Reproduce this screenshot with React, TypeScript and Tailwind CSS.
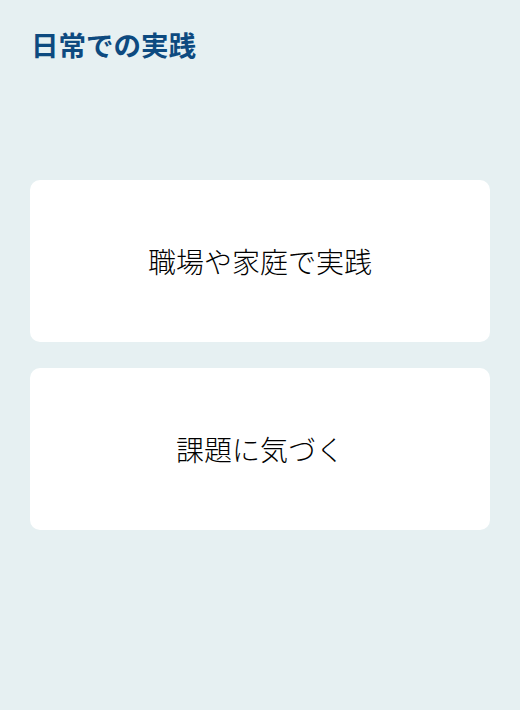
import * as React from "react";

const items = ["職場や家庭で実践", "課題に気づく"];

export default function App() {
  return (
    <div
      className="min-h-[710px] w-full bg-[#e6f0f2] px-[30px] pt-[26px]"
      style={{ fontFamily: '"Noto Sans CJK JP", "Noto Sans", sans-serif' }}
    >
      {/* Heading */}
      <h1 className="text-[27.5px] font-bold leading-[36px] text-[#0d4a80] pl-[1px]">日常での実践</h1>

      {/* Cards */}
      <div className="mt-[118px] flex flex-col gap-[26px]">
        {items.map((t, i) => (
          <div
            key={i}
            className="flex h-[162px] items-center justify-center rounded-[10px] bg-white"
          >
            <span className="text-[28px] font-light text-black">{t}</span>
          </div>
        ))}
      </div>
    </div>
  );
}
